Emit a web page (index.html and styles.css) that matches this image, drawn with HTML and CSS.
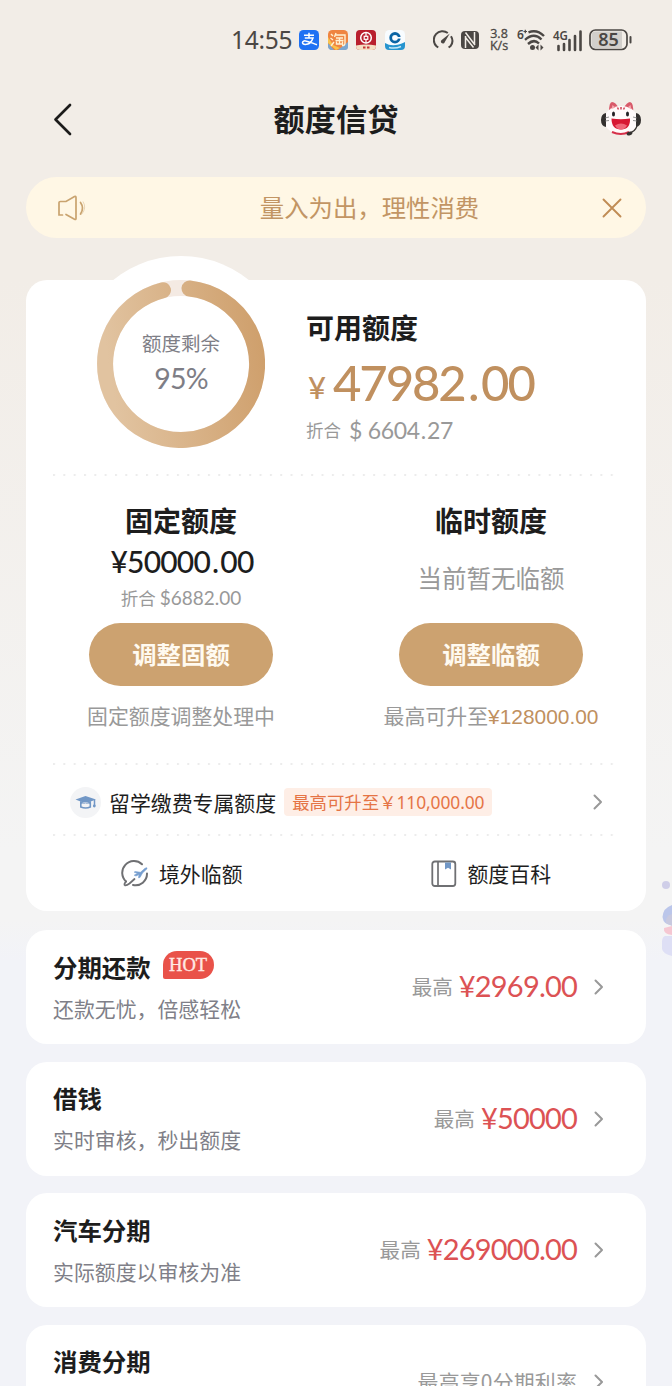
FILE: index.html
```html
<!DOCTYPE html>
<html lang="zh-CN">
<head>
<meta charset="utf-8">
<title>额度信贷</title>
<link rel="stylesheet" href="styles.css">
</head>
<body>
<div class="screen">
  <div class="statusbar">
    <span class="clock">14:55</span>
    <div class="apps">
      <svg width="20" height="20" viewBox="0 0 20 20"><rect width="20" height="20" rx="4.5" fill="#1f71f3"/><path d="M5 5.2h10M10 2.8v5M5.800 8h8.200c-1.200 3.600-4.200 6.500-7.700 6.500-4 0-3.500-4 .2-3.600 3.500.4 7.500 2.600 11.500 3.900" fill="none" stroke="#fff" stroke-width="1.500"/></svg>
      <svg width="20" height="20" viewBox="0 0 20 20"><rect width="20" height="20" rx="4.500" fill="#ef8440"/><path d="M0 13L6 20H4Q0 20 0 16zM10 20l10-8v5q0 3-3 3z" fill="#7ba6cf"/><path d="M0 7l5 8 7 3-4 2-8-7z" fill="#f9c34c"/><path d="M3 4l2 2M2.500 8l2.500 2M3 16l3-4M8 3L6.500 7M7.500 5H17v8q0 3-3 2.500M8 8h7M7.500 10.500h8M11.500 8v6M8.500 11.500V14h6v-2.500" fill="none" stroke="#fff1d2" stroke-width="1.400"/></svg>
      <svg width="20" height="20" viewBox="0 0 20 20"><rect width="20" height="20" rx="4" fill="#b91f2e"/><path d="M0 15.500q10-2 20 0V16q0 4-4 4H4q-4 0-4-4z" fill="#f4dfc4"/><circle cx="10" cy="7.800" r="5.300" fill="none" stroke="#fff" stroke-width="1.500"/><rect x="8.200" y="6.300" width="3.600" height="3" fill="none" stroke="#fff" stroke-width="1.200"/><path d="M10 2.500v3.800M10 9.300v4" stroke="#fff" stroke-width="1.200"/><path d="M7 17.500h2.500M11 17.500h2.500" stroke="#c53636" stroke-width="2"/></svg>
      <svg width="20" height="20" viewBox="0 0 20 20"><rect width="20" height="20" rx="4.500" fill="#f8fcff"/><path d="M0 13q8 5 20-1v4q0 4-4 4H4q-4 0-4-4z" fill="#2694cf"/><path d="M4 17.500q6 1.500 12-1" stroke="#c4e8f7" stroke-width="1.500" fill="none"/><circle cx="10" cy="7.800" r="4.300" fill="none" stroke="#0b65a5" stroke-width="2.800"/><rect x="8.600" y="6.400" width="2.800" height="2.800" fill="#fff"/><path d="M11.500 7h4.500v1.600h-4.500z" fill="#f8fcff"/></svg>
    </div>
    <div class="signals">
      <svg width="21" height="20" viewBox="0 0 21 20"><path d="M5.200 17.500L3.300 16A8.700 8.700 0 0 1 14.800 3M18 6.200A8.700 8.700 0 0 1 17.600 16l-2 1.500" fill="none" stroke="#4b4744" stroke-width="2"/><path d="M16.800 3.600L11.800 12a2 2 0 1 1-2.800-2.300z" fill="#4b4744"/></svg>
      <svg width="18" height="20" viewBox="0 0 18 20"><rect y="1" width="18" height="18" rx="4" fill="#4b4744"/><path d="M4.500 18V6M13.500 14V2M4.500 2.500L14 15M4.500 7.500l8 10" fill="none" stroke="#f2ede7" stroke-width="1.500"/></svg>
      <div class="rate"><span>3.8</span><span>K/s</span></div>
      <svg width="30" height="24" viewBox="0 0 30 24"><text x="1" y="11" font-size="12" class="mini">6</text><path d="M7.500 3.500h3.500M9.300 1.800v3.500" stroke="#4b4744" stroke-width="1.200"/><path d="M12.500 4.300Q21 1 28 8M9 11.800Q18 4 25.500 11.500M12 16Q18 10.500 23 15.500" fill="none" stroke="#4b4744" stroke-width="2.400"/><circle cx="16.500" cy="19.500" r="2.500" fill="#4b4744"/><path d="M19.500 19.500l3-3v6zM27.500 19.500l-3-3v6z" fill="#4b4744"/></svg>
      <svg width="31" height="24" viewBox="0 0 31 24"><text x="1" y="11.500" font-size="12.500" textLength="15" lengthAdjust="spacingAndGlyphs" class="mini">4G</text><path d="M6.500 18v4M12 16v6M17.500 12v10M23 8v14M28.500 3.500V22" stroke="#4b4744" stroke-width="2.600" stroke-linecap="round"/></svg>
      <svg width="43" height="24" viewBox="0 -1 43 24"><rect x="1" y="1" width="37" height="19.500" rx="5.500" fill="#f2ede7" stroke="#4b4744" stroke-width="1.700"/><path d="M6 2.500h27v16.500H6q-3.500 0-3.500-4V6.500q0-4 3.500-4" fill="#d2cfcb"/><path d="M41.500 8v5.500" stroke="#4b4744" stroke-width="2" stroke-linecap="round"/><text x="19.500" y="17.200" font-size="18" text-anchor="middle" class="mini">85</text></svg>
    </div>
  </div>

  <header class="nav">
    <svg width="20" height="34" viewBox="0 0 20 34"><path d="M18 3L3.500 17.500 18 32" fill="none" stroke="#1c1b1a" stroke-width="2.700" stroke-linecap="round" stroke-linejoin="round"/></svg>
    <h1>额度信贷</h1>
    <svg width="42" height="38" viewBox="0 0 42 38"><path d="M9 12Q9 2 12 2q4 0 7 7zM23 9q4-7 7-7 4 1 3 11z" fill="#d85a6a"/><ellipse cx="21" cy="20" rx="17" ry="14" fill="#fffafa"/><path d="M11.500 9l1-4 3 2.500zM27.500 7.500l3-2.500 .8 4z" fill="#f5a9af"/><path d="M17.500 7.500l1 2M21 7v2.500M24.500 7.500l-1 2" stroke="#d34b5e" stroke-width="1.600"/><path d="M6 13q-5 1-5 7t5 7zM36 13q5 1 5 7t-5 7z" fill="#34312f"/><ellipse cx="13.500" cy="14" rx="1.500" ry="2.500" fill="#242124"/><ellipse cx="27.500" cy="14" rx="1.500" ry="2.500" fill="#242124"/><path d="M5 18l4-1M5 21l4-.5M33 17l4 1M33 20.500l4 .5" stroke="#777" stroke-width=".8"/><path d="M11.500 18.500q9.500 1.500 18.500 0 .5 11-9 11t-9.500-11z" fill="#d71833"/><path d="M15 25.500q6-4 12 0-2 4-6 4t-6-4" fill="#ef6678"/><path d="M12 32q9 4 17 0" fill="none" stroke="#d6304a" stroke-width="2"/><path d="M37 26q-2 6-8 7" fill="none" stroke="#34312f" stroke-width="1.200"/><ellipse cx="29.500" cy="33.500" rx="3" ry="1.800" transform="rotate(-20 29.500 33.500)" fill="#34312f"/></svg>
  </header>

  <div class="notice">
    <svg width="30" height="28" viewBox="0 0 30 28"><path d="M5.500 21H2V8.500Q2 7.500 3.500 7.500H9L17.500 2.500Q19 2 19 3.500v21q0 1.500-1.500.8L9 20.500M23.500 8.500q4 5.500 0 11.500" fill="none" stroke="#c9a36f" stroke-width="1.700" stroke-linecap="round"/><path d="M26 7.500q4 6.500-1.500 13" fill="none" stroke="#c9a36f" stroke-width="1" opacity=".4"/></svg>
    <span>量入为出，理性消费</span>
    <svg width="22" height="22" viewBox="0 0 22 22"><path d="M2.500 2.500l17 17M19.500 2.500l-17 17" stroke="#c08c55" stroke-width="1.900" stroke-linecap="round"/></svg>
  </div>

  <main class="card limits">
    <section class="summary">
      <div class="gauge">
        <svg width="168" height="168" viewBox="0 0 168 168">
          <defs><linearGradient id="gold" x1="1" y1="0.200" x2="0" y2="0.350"><stop offset="0" stop-color="#cfa06d"/><stop offset="1" stop-color="#e1c3a0"/></linearGradient></defs>
          <circle cx="84" cy="84" r="76" fill="none" stroke="#f4eae3" stroke-width="16"/>
          <path d="M92.500 8.480A76 76 0 1 1 66 10.200" fill="none" stroke="url(#gold)" stroke-width="16" stroke-linecap="round"/>
        </svg>
        <div class="gauge-text"><span>额度剩余</span><b>95%</b></div>
      </div>
      <div class="available">
        <h2>可用额度</h2>
        <p class="total"><small>¥</small><span>47982<i>.</i>00</span></p>
        <p class="usd">折合<span>$ 6604<i>.</i>27</span></p>
      </div>
    </section>
    <div class="dots"></div>
    <section class="columns">
      <div class="column">
        <h2>固定额度</h2>
        <p class="fixed">¥50000<i>.</i>00</p>
        <p class="convert">折合 <span>$6882.00</span></p>
        <button>调整固额</button>
        <p class="note">固定额度调整处理中</p>
      </div>
      <div class="column">
        <h2>临时额度</h2>
        <p class="empty">当前暂无临额</p>
        <button>调整临额</button>
        <p class="note">最高可升至<span>¥128000.00</span></p>
      </div>
    </section>
    <div class="dots"></div>
    <section class="study">
      <svg width="31" height="31" viewBox="0 0 31 31"><circle cx="15.500" cy="15.500" r="15.500" fill="#f3f4f6"/><path d="M5.500 12.500L15.500 9l10.500 3.500-10.500 4z" fill="#7197c6"/><path d="M10.800 15.500v4.500q5 2 9.500 0v-4.500" fill="#f3f4f6" stroke="#7197c6" stroke-width="1.600"/><path d="M10 14l5.500 2.500 5.500-2.500v3q-5.500-1.500-11 0z" fill="#7197c6"/><path d="M24.500 13v6" stroke="#7197c6" stroke-width="1.500"/><circle cx="24.300" cy="19" r="1.400" fill="#7197c6"/></svg>
      <span class="study-name">留学缴费专属额度</span>
      <span class="tag">最高可升至￥<i>110,000.00</i></span>
      <svg class="chevron" width="10" height="16" viewBox="0 0 10 16"><path d="M1.500 1.500L8 8l-6.500 6.500" /></svg>
    </section>
    <div class="dots"></div>
    <section class="links">
      <div class="link"><svg width="28" height="28" viewBox="0 0 28 28"><path d="M21 4.200A11.300 11.300 0 0 0 5 21.500M26 13.500A11.500 11.500 0 0 1 12 25" fill="none" stroke="#6f7073" stroke-width="2" stroke-linecap="round"/><path d="M5 21.500q-2.500 3-1 3.800 1.500.5 4.500-1.800l5-4.500" fill="none" stroke="#6f7073" stroke-width="1.800" stroke-linecap="round"/><path d="M14 11.500l5.500.8 4.500-4q2.500-1.500 2 .5L21.500 13l-2.500 4.500-1.500.3.500-3.300-3 1.500-1.800-.8 3.300-2-3.300-1z" fill="#779fd0" stroke="#779fd0" stroke-width=".6"/></svg><span>境外临额</span></div>
      <div class="link"><svg width="26" height="28" viewBox="0 0 26 28"><rect x="1.300" y="1.500" width="23" height="24.500" rx="2.500" fill="#fff" stroke="#6f7073" stroke-width="1.800"/><path d="M7 2v24" stroke="#6f7073" stroke-width="1.700"/><path d="M14 2.400h6v7l-3-1.600-3 1.600z" fill="#7197c6"/></svg><span>额度百科</span></div>
    </section>
  </main>

  <article class="card product">
    <div class="info"><h3>分期还款<em>HOT</em></h3><p>还款无忧，倍感轻松</p></div>
    <div class="offer"><span>最高</span><b>¥2969.00</b></div>
    <svg class="chevron" width="10" height="16" viewBox="0 0 10 16"><path d="M1.500 1.500L8 8l-6.500 6.500"/></svg>
  </article>
  <article class="card product">
    <div class="info"><h3>借钱</h3><p>实时审核，秒出额度</p></div>
    <div class="offer"><span>最高</span><b>¥50000</b></div>
    <svg class="chevron" width="10" height="16" viewBox="0 0 10 16"><path d="M1.500 1.500L8 8l-6.500 6.500"/></svg>
  </article>
  <article class="card product">
    <div class="info"><h3>汽车分期</h3><p>实际额度以审核为准</p></div>
    <div class="offer"><span>最高</span><b>¥269000.00</b></div>
    <svg class="chevron" width="10" height="16" viewBox="0 0 10 16"><path d="M1.500 1.500L8 8l-6.500 6.500"/></svg>
  </article>
  <article class="card product">
    <div class="info"><h3>消费分期</h3></div>
    <div class="offer perk"><span>最高享0分期利率</span></div>
    <svg class="chevron" width="10" height="16" viewBox="0 0 10 16"><path d="M1.500 1.500L8 8l-6.500 6.500"/></svg>
  </article>

  <svg class="floater" width="12" height="80" viewBox="0 0 12 80"><circle cx="6" cy="5" r="4" fill="#cfcee8"/><path d="M12 25Q3 28 2.500 37q1 8 9.500 8z" fill="#bbc6ea"/><path d="M12 34q-7 2-6 9l6 3z" fill="#c8c9df"/><path d="M12 46l-8 2q-1 6 8 7z" fill="#f5c7d2"/><path d="M12 56H5q-3 1-3 6v7q1 5 10 7z" fill="#dedff5"/></svg>
</div>
</body>
</html>
```
FILE: styles.css
```css
* { box-sizing: border-box; }
body { margin: 0; font-family: "Noto Sans CJK SC", sans-serif; color: #1d1d1d; }
h1, h2, h3, p { margin: 0; }
i { font-style: normal; }
svg { display: block; flex: none; }
.screen {
  position: relative; width: 672px; height: 1386px; overflow: hidden; padding: 0 26px;
  background: linear-gradient(#f2ede7 0, #f2ede7 280px, #f4f4f4 850px, #f4f4f4 920px, #f2f3f8 960px);
}
.statusbar { height: 80px; margin-right: -26px; padding-left: 205px; display: flex; align-items: center; color: #4b4744; }
.clock { width: 68px; font: 24.500px/30px "Noto Sans", sans-serif; letter-spacing: -.3px; }
.apps { display: flex; gap: 8.500px; width: 134px; }
.signals { display: flex; align-items: center; gap: 7px; }
.signals > :nth-child(n+5) { margin-left: -1px; }
.rate { width: 20px; margin-left: 3px; display: flex; flex-direction: column; align-items: center; font: 12.500px/12px "Open Sans", sans-serif; -webkit-text-stroke: .3px; }
.mini { font-family: "Noto Sans", sans-serif; font-weight: 600; fill: #4b4744; }

.nav { height: 78px; padding: 0 4px 0 26px; display: flex; align-items: center; justify-content: space-between; }
.nav h1 { font-size: 31.200px; line-height: 40px; font-weight: 700; margin-top: -3px; }
.notice { margin-top: 19px; height: 61px; width: 620px; border-radius: 31px; background: #fff7e5; padding: 0 23px 0 31px; display: flex; align-items: center; justify-content: space-between; color: #c29564; font-size: 24.400px; }
.notice span { padding: 0 0 2px 51px; }

.card { width: 620px; border-radius: 21px; background: #fff; }
.limits { margin-top: 42px; height: 631px; }
.summary { height: 194px; display: flex; gap: 17px; padding-left: 47px; }
.gauge { width: 216px; height: 216px; margin-top: -24px; padding: 24px; border-radius: 50%; background: #fff; display: grid; }
.gauge > * { grid-area: 1 / 1; }
.gauge-text { display: flex; flex-direction: column; align-items: center; color: #7e7e86; padding-top: 49px; }
.gauge-text span { font-size: 19.500px; line-height: 28px; }
.gauge-text b { font: 400 28.500px/43px Lato, sans-serif; letter-spacing: -.8px; }
.available { padding-top: 27px; }
h2 { font-size: 28px; line-height: 40px; font-weight: 700; }
.total { height: 70px; padding-left: 2px; display: flex; align-items: baseline; color: #c0905f; font: 500 49px/70px Lato, sans-serif; font-kerning: none; }
.total small { font-size: 31px; line-height: 66px; width: 25px; position: relative; top: -2px; }
.total span { letter-spacing: -2.100px; }
.total i { padding: 0 3.500px; }
.usd { display: flex; align-items: center; gap: 8px; font-size: 17.500px; line-height: 26px; color: #999; }
.usd span { margin-top: -1px; font: 23px/26px Lato, sans-serif; letter-spacing: -.3px; font-kerning: none; }
.usd i { padding: 0 1px; }
.dots { height: 2px; margin: 0 32px 0 27px; background: radial-gradient(circle at 1px 1px, #ececec 1px, transparent 1.500px) 0 0 / 10.340px 2px repeat-x; }
.columns { display: grid; grid-template-columns: 1fr 1fr; height: 287px; padding-top: 24px; }
.column { display: flex; flex-direction: column; align-items: center; }
.fixed { font: 500 30px/43px Lato, sans-serif; height: 44px; letter-spacing: -.8px; font-kerning: none; padding-left: 2px; }
.fixed i { padding: 0 2px; }
.convert { font-size: 17.500px; line-height: 28px; color: #999; }
.convert span { font-family: Lato, sans-serif; font-size: 19px; }
.column button { margin-top: 11px; width: 184px; height: 63px; border: 0; border-radius: 32px; background: #cca270; color: #fffaf0; font: 700 24.400px/36px "Noto Sans CJK SC", sans-serif; padding: 0 0 1px; }
.empty { height: 72px; font-size: 24.500px; line-height: 76px; color: #999; }
.note { margin-top: 13px; font-size: 20.900px; line-height: 32px; color: #999; white-space: nowrap; }
.note span { font-family: "Liberation Sans", sans-serif; color: #c0905f; }
.study { height: 69px; padding: 5px 43px 0 44px; display: flex; align-items: center; font-size: 20.900px; }
.study-name { margin: -1px 8px 0; }
.tag { height: 28px; padding: 0 8px; border-radius: 4px; background: #feeee6; color: #e57445; font-size: 17.400px; line-height: 27px; white-space: nowrap; }
.tag i { font-family: "Noto Sans", sans-serif; letter-spacing: -.1px; }
.chevron { margin-left: auto; fill: none; stroke: #999; stroke-width: 2; stroke-linecap: round; stroke-linejoin: round; }
.links { height: 75px; padding-left: 1px; display: grid; grid-template-columns: 1fr 1fr; }
.link { display: flex; align-items: center; justify-content: center; gap: 10px; font-size: 20.900px; }
.link span { margin-top: -2px; }

.product { margin-top: 17.500px; height: 114px; padding: 0 42px 0 27px; display: flex; align-items: center; }
.limits + .product { margin-top: 19px; }
.info { align-self: flex-start; padding-top: 18.500px; }
.info h3 { display: flex; font-size: 24.400px; line-height: 36px; font-weight: 700; }
.info em { width: 51px; height: 28px; margin: 2px 0 0 12px; border-radius: 14px 14px 14px 2px; background: #e95249; color: #ffe9e4; font: 18.500px/28px "Liberation Serif", serif; -webkit-text-stroke: .4px; text-align: center; }
.info p { margin-top: 6px; font-size: 20.900px; line-height: 34px; color: #7f7f88; }
.offer { flex: 1; display: flex; align-items: center; justify-content: flex-end; gap: 6px; margin-right: 17px; font-size: 20.600px; line-height: 36px; color: #999; }
.offer span { margin-top: -2px; }
.offer b { margin-top: -2px; font: 400 29px/36px Lato, sans-serif; letter-spacing: -.8px; color: #dc5254; }
.perk { font-size: 20.900px; letter-spacing: .2px; }
.floater { position: absolute; right: 0; top: 880px; }
```
